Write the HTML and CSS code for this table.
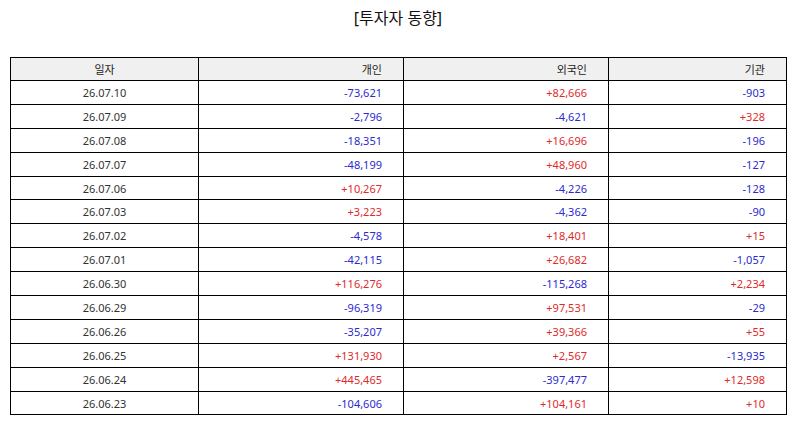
FILE: index.html
```html
<!DOCTYPE html>
<html lang="ko">
<head>
<meta charset="utf-8">
<link rel="stylesheet" href="styles.css">
</head>
<body>
<div class="page">
  <h1 class="title">[투자자 동향]</h1>
  <table class="grid">
    <colgroup>
      <col class="c1"><col class="c2"><col class="c3"><col class="c4">
    </colgroup>
    <thead>
      <tr><th class="date">일자</th><th>개인</th><th>외국인</th><th>기관</th></tr>
    </thead>
    <tbody>
      <tr><td class="date">26.07.10</td><td class="neg">-73,621</td><td class="pos">+82,666</td><td class="neg">-903</td></tr>
      <tr><td class="date">26.07.09</td><td class="neg">-2,796</td><td class="neg">-4,621</td><td class="pos">+328</td></tr>
      <tr><td class="date">26.07.08</td><td class="neg">-18,351</td><td class="pos">+16,696</td><td class="neg">-196</td></tr>
      <tr><td class="date">26.07.07</td><td class="neg">-48,199</td><td class="pos">+48,960</td><td class="neg">-127</td></tr>
      <tr><td class="date">26.07.06</td><td class="pos">+10,267</td><td class="neg">-4,226</td><td class="neg">-128</td></tr>
      <tr><td class="date">26.07.03</td><td class="pos">+3,223</td><td class="neg">-4,362</td><td class="neg">-90</td></tr>
      <tr><td class="date">26.07.02</td><td class="neg">-4,578</td><td class="pos">+18,401</td><td class="pos">+15</td></tr>
      <tr><td class="date">26.07.01</td><td class="neg">-42,115</td><td class="pos">+26,682</td><td class="neg">-1,057</td></tr>
      <tr><td class="date">26.06.30</td><td class="pos">+116,276</td><td class="neg">-115,268</td><td class="pos">+2,234</td></tr>
      <tr><td class="date">26.06.29</td><td class="neg">-96,319</td><td class="pos">+97,531</td><td class="neg">-29</td></tr>
      <tr><td class="date">26.06.26</td><td class="neg">-35,207</td><td class="pos">+39,366</td><td class="pos">+55</td></tr>
      <tr><td class="date">26.06.25</td><td class="pos">+131,930</td><td class="pos">+2,567</td><td class="neg">-13,935</td></tr>
      <tr><td class="date">26.06.24</td><td class="pos">+445,465</td><td class="neg">-397,477</td><td class="pos">+12,598</td></tr>
      <tr><td class="date">26.06.23</td><td class="neg">-104,606</td><td class="pos">+104,161</td><td class="pos">+10</td></tr>
    </tbody>
  </table>
</div>
</body>
</html>
```

FILE: styles.css
```css
html, body {
  margin: 0;
  padding: 0;
  background: #ffffff;
}
.page {
  padding: 0 8px 0 10px;
  font-family: "Noto Sans", "Noto Sans CJK KR", sans-serif;
  color: #333333;
}
.title {
  margin: 0;
  height: 57px;
  padding-top: 5px;
  box-sizing: border-box;
  text-align: center;
  font-size: 16px;
  font-weight: normal;
  color: #111111;
  line-height: 26px;
}
.grid {
  border-collapse: collapse;
  table-layout: fixed;
  width: 776px;
  font-size: 11px;
}
.c1 { width: 188px; }
.c2 { width: 205px; }
.c3 { width: 205px; }
.c4 { width: 178px; }
.grid th, .grid td {
  border: 1px solid #000000;
  padding: 0 21px 0 4px;
  text-align: right;
  font-weight: normal;
  white-space: nowrap;
}
.grid thead tr { height: 23px; }
.grid tbody tr { height: 23.9px; }
.grid th {
  background: #f0f0f0;
  color: #222222;
}
.grid .date {
  text-align: center;
  padding: 0;
}
.neg { color: #2a2ad0; }
.pos { color: #e02a2a; }
```
